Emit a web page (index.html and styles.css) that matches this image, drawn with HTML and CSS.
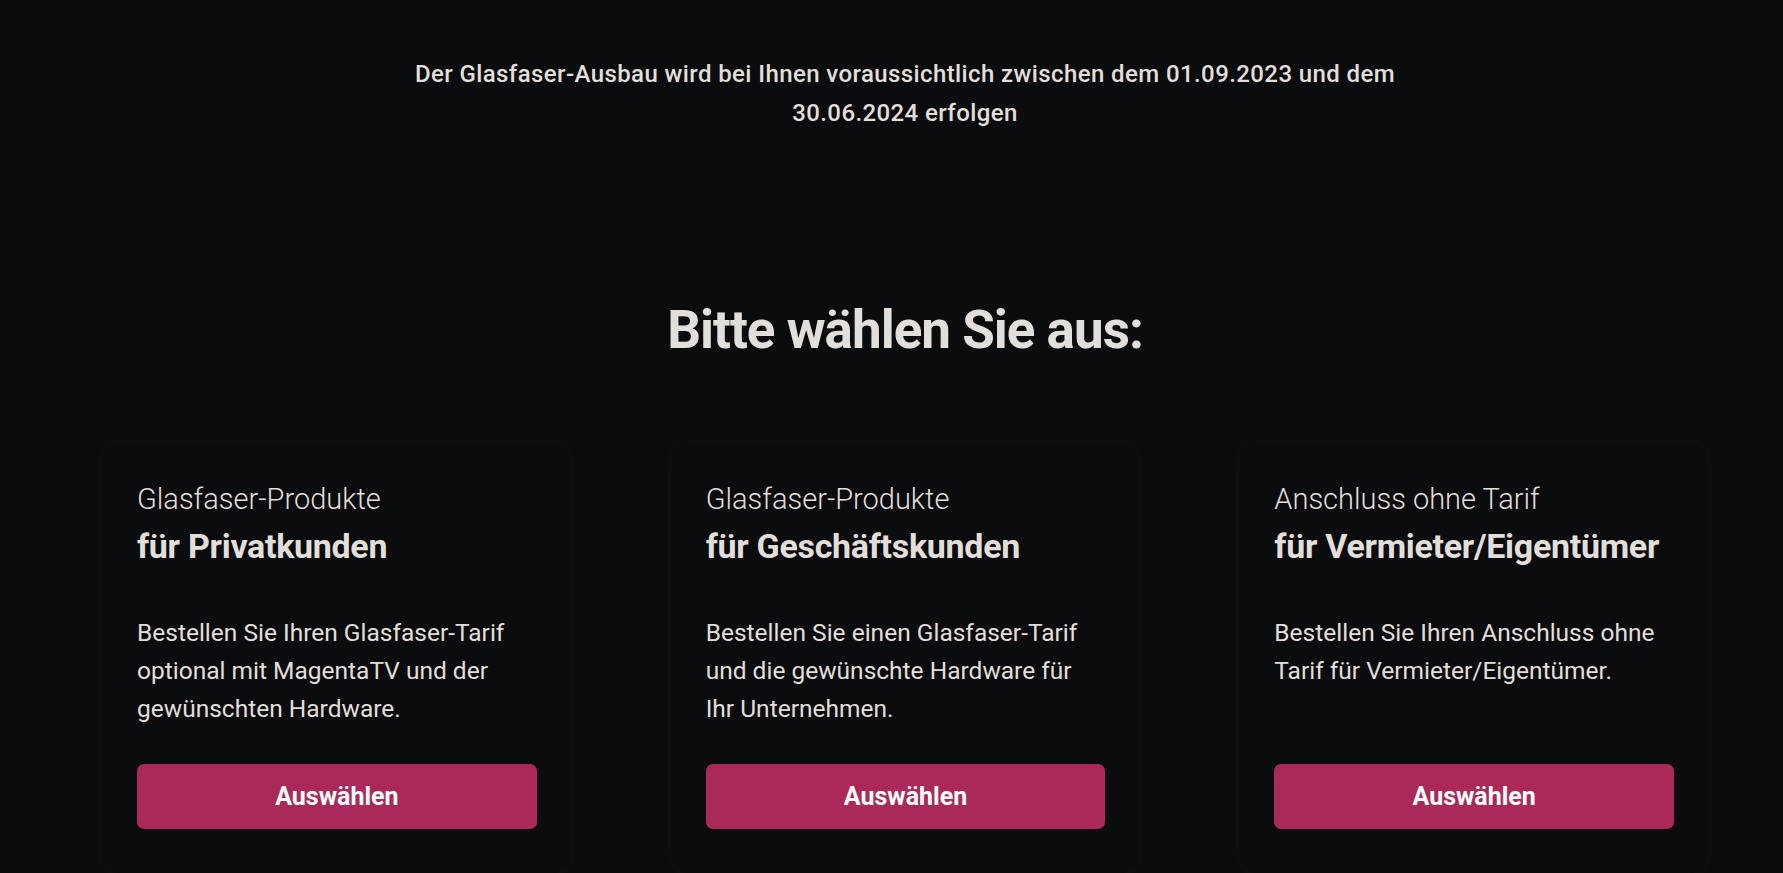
FILE: index.html
```html
<!DOCTYPE html>
<html lang="de">
<head>
<meta charset="utf-8">
<title>Glasfaser</title>
<link rel="stylesheet" href="styles.css">
</head>
<body>
<main class="page">
  <p class="notice">Der Glasfaser-Ausbau wird bei Ihnen voraussichtlich zwischen dem 01.09.2023 und dem<br>30.06.2024 erfolgen</p>
  <h1 class="heading">Bitte wählen Sie aus:</h1>
  <section class="cards">
    <article class="card">
      <div class="card-title">Glasfaser-Produkte</div>
      <div class="card-sub">für Privatkunden</div>
      <p class="card-text">Bestellen Sie Ihren Glasfaser-Tarif optional mit MagentaTV und der gewünschten Hardware.</p>
      <button class="btn">Auswählen</button>
    </article>
    <article class="card">
      <div class="card-title">Glasfaser-Produkte</div>
      <div class="card-sub">für Geschäftskunden</div>
      <p class="card-text">Bestellen Sie einen Glasfaser-Tarif und die gewünschte Hardware für Ihr Unternehmen.</p>
      <button class="btn">Auswählen</button>
    </article>
    <article class="card">
      <div class="card-title">Anschluss ohne Tarif</div>
      <div class="card-sub">für Vermieter/Eigentümer</div>
      <p class="card-text">Bestellen Sie Ihren Anschluss ohne Tarif für Vermieter/Eigentümer.</p>
      <button class="btn">Auswählen</button>
    </article>
  </section>
</main>
</body>
</html>
```
FILE: styles.css
```css
html, body {
  margin: 0;
  padding: 0;
  background: #0b0c0e;
  height: 100%;
  overflow: hidden;
}
body {
  font-family: Roboto, "Noto Sans", sans-serif;
  color: #e2dfda;
}
.page {
  padding: 55px 75px 0 102px;
  display: flex;
  flex-direction: column;
  align-items: center;
}
.notice {
  margin: 0;
  text-align: center;
  font-size: 24px;
  line-height: 39px;
  font-weight: 500;
  letter-spacing: 0.4px;
}
.heading {
  margin: 165px 0 0;
  font-size: 53px;
  line-height: 64px;
  font-weight: 700;
  letter-spacing: -1px;
  text-align: center;
}
.cards {
  margin-top: 81px;
  display: flex;
  gap: 100px;
  width: 100%;
}
.card {
  flex: 1 1 0;
  min-height: 430px;
  box-sizing: border-box;
  padding: 37px 34px 44px 35px;
  background: #0b0c0e;
  border-radius: 18px;
  box-shadow: 0 0 12px rgba(255, 255, 255, 0.035);
  display: flex;
  flex-direction: column;
}
.card-title {
  font-size: 29px;
  line-height: 38px;
  font-weight: 300;
}
.card-sub {
  font-size: 34px;
  line-height: 44px;
  font-weight: 700;
  letter-spacing: -0.3px;
  margin-top: 6px;
}
.card-text {
  margin: 46px 0 0;
  font-size: 24.5px;
  line-height: 38px;
  font-weight: 400;
}
.btn {
  margin-top: auto;
  height: 65px;
  width: 100%;
  border: none;
  border-radius: 7px;
  background: #ab2959;
  color: #fff;
  font-family: inherit;
  font-size: 25px;
  font-weight: 700;
}
```
